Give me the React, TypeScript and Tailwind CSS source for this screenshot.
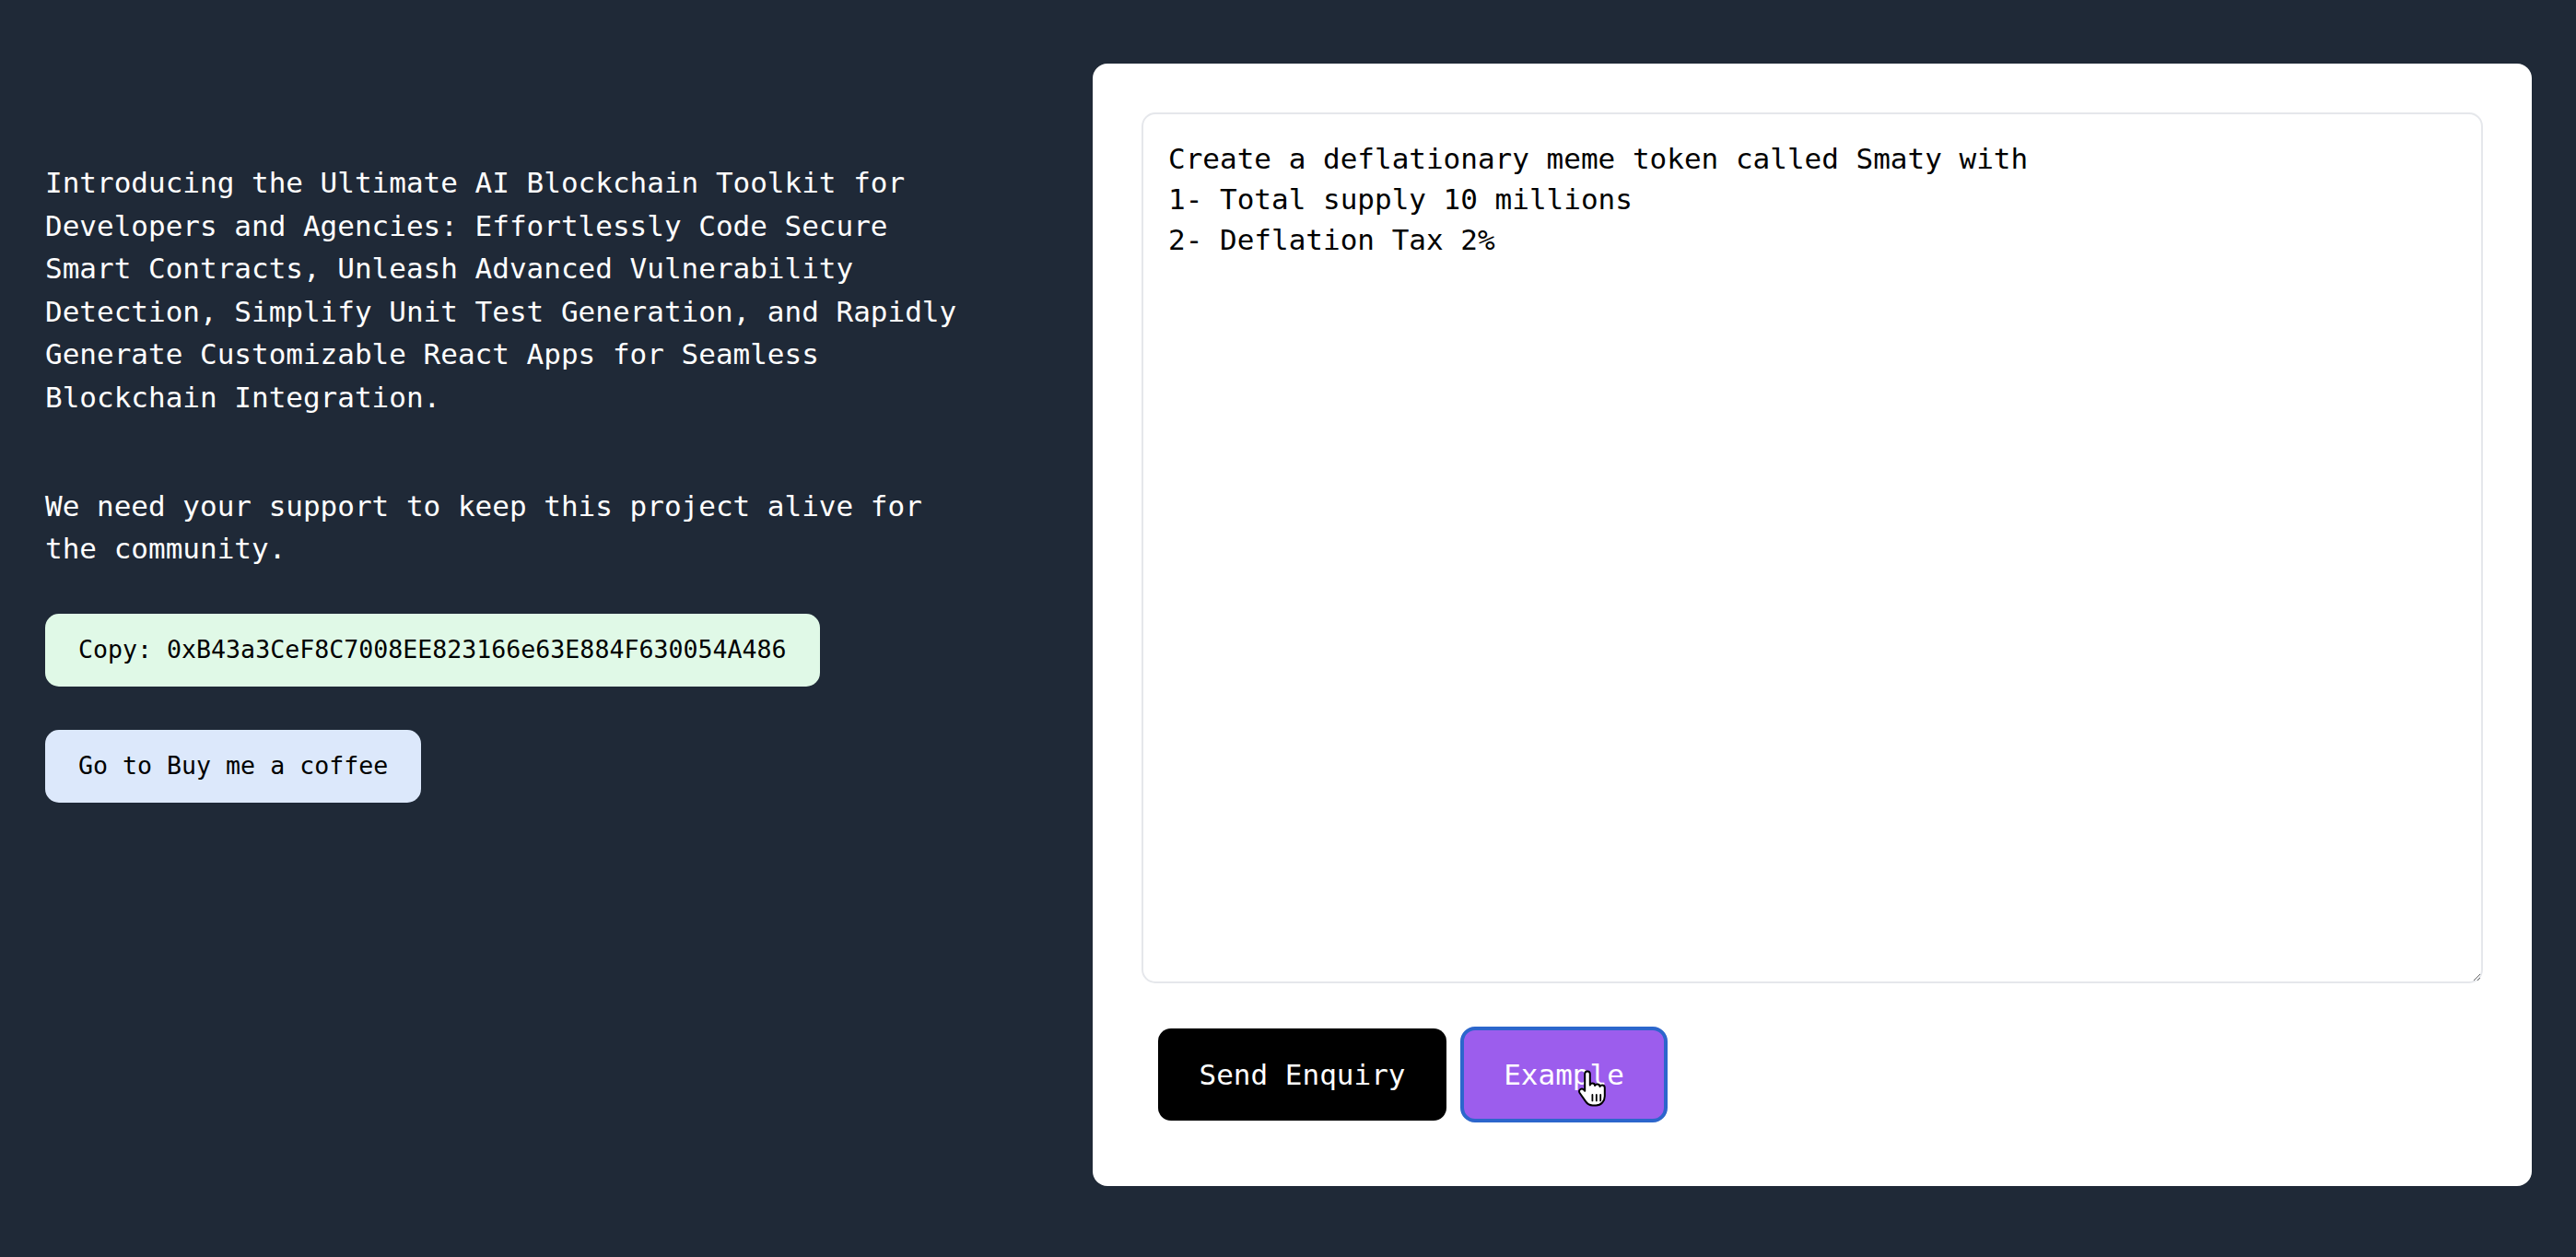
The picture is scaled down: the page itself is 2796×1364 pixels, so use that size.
import React from "react";

const mono = { fontFamily: '"DejaVu Sans Mono", "Liberation Mono", monospace' };

function HandCursor() {
  return (
    <svg
      className="absolute left-[1712px] top-[1160px] pointer-events-none"
      width="34"
      height="42"
      viewBox="0 0 17 21"
    >
      <path
        d="M5.5 1.2c.8 0 1.4.6 1.4 1.4v6.1c.2-.6.7-.9 1.3-.9.8 0 1.3.5 1.4 1.2.2-.5.7-.8 1.3-.8.8 0 1.3.6 1.4 1.3.2-.4.7-.7 1.2-.7.8 0 1.4.6 1.4 1.4v4.6c0 2.7-2 4.9-4.8 4.9H8.3c-1.6 0-2.8-.7-3.7-2L1.3 13c-.5-.7-.3-1.6.4-2 .6-.4 1.4-.3 1.9.3l.5.6V2.6c0-.8.6-1.4 1.4-1.4z"
        fill="#fff"
        stroke="#000"
        strokeWidth="1"
        strokeLinejoin="round"
      />
      <path d="M8.2 14v3.2M10.4 14v3.2M12.6 14v3.2" stroke="#000" strokeWidth="0.9" strokeLinecap="round" />
    </svg>
  );
}

export default function App() {
  return (
    <div
      className="relative w-full h-[1364px] bg-[#1f2937] flex items-start pl-[49px] pr-[48px] pt-[69px] overflow-hidden"
      style={mono}
    >
      <div className="w-[1012px] pt-[106px] flex flex-col items-start text-white">
        <p className="text-[31px] leading-[46.6px]">
          Introducing the Ultimate AI Blockchain Toolkit for Developers and Agencies: Effortlessly Code Secure
          Smart Contracts, Unleash Advanced Vulnerability Detection, Simplify Unit Test Generation, and Rapidly
          Generate Customizable React Apps for Seamless Blockchain Integration.
        </p>
        <p className="text-[31px] leading-[46.6px] mt-[71px]">
          We need your support to keep this project alive for the community.
        </p>
        <button className="mt-[47px] h-[79px] px-[36px] rounded-[15px] bg-[#e0f9e7] text-black text-[26.6px]">
          Copy: 0xB43a3CeF8C7008EE823166e63E884F630054A486
        </button>
        <button className="mt-[47px] h-[79px] px-[36px] rounded-[15px] bg-[#dce8fb] text-black text-[26.6px]">
          Go to Buy me a coffee
        </button>
      </div>
      <div className="ml-auto w-[1562px] h-[1218px] bg-white rounded-[16px] pt-[53px] px-[53px] flex flex-col">
        <textarea
          className="w-[1456px] h-[945px] border-2 border-[#e5e7eb] rounded-[15px] px-[27px] py-[26px] text-[31px] leading-[44px] text-black outline-none"
          style={mono}
          defaultValue={"Create a deflationary meme token called Smaty with\n1- Total supply 10 millions\n2- Deflation Tax 2%"}
        />
        <div className="flex items-center gap-[15px] mt-[47px] pl-[18px]">
          <button className="h-[100px] w-[313px] rounded-[14px] bg-black text-white text-[31px]">
            Send Enquiry
          </button>
          <button className="h-[104px] w-[225px] rounded-[16px] border-[4px] border-[#2c66cc] bg-[#9c5ded] text-white text-[31px]">
            Example
          </button>
        </div>
      </div>
      <HandCursor />
    </div>
  );
}
